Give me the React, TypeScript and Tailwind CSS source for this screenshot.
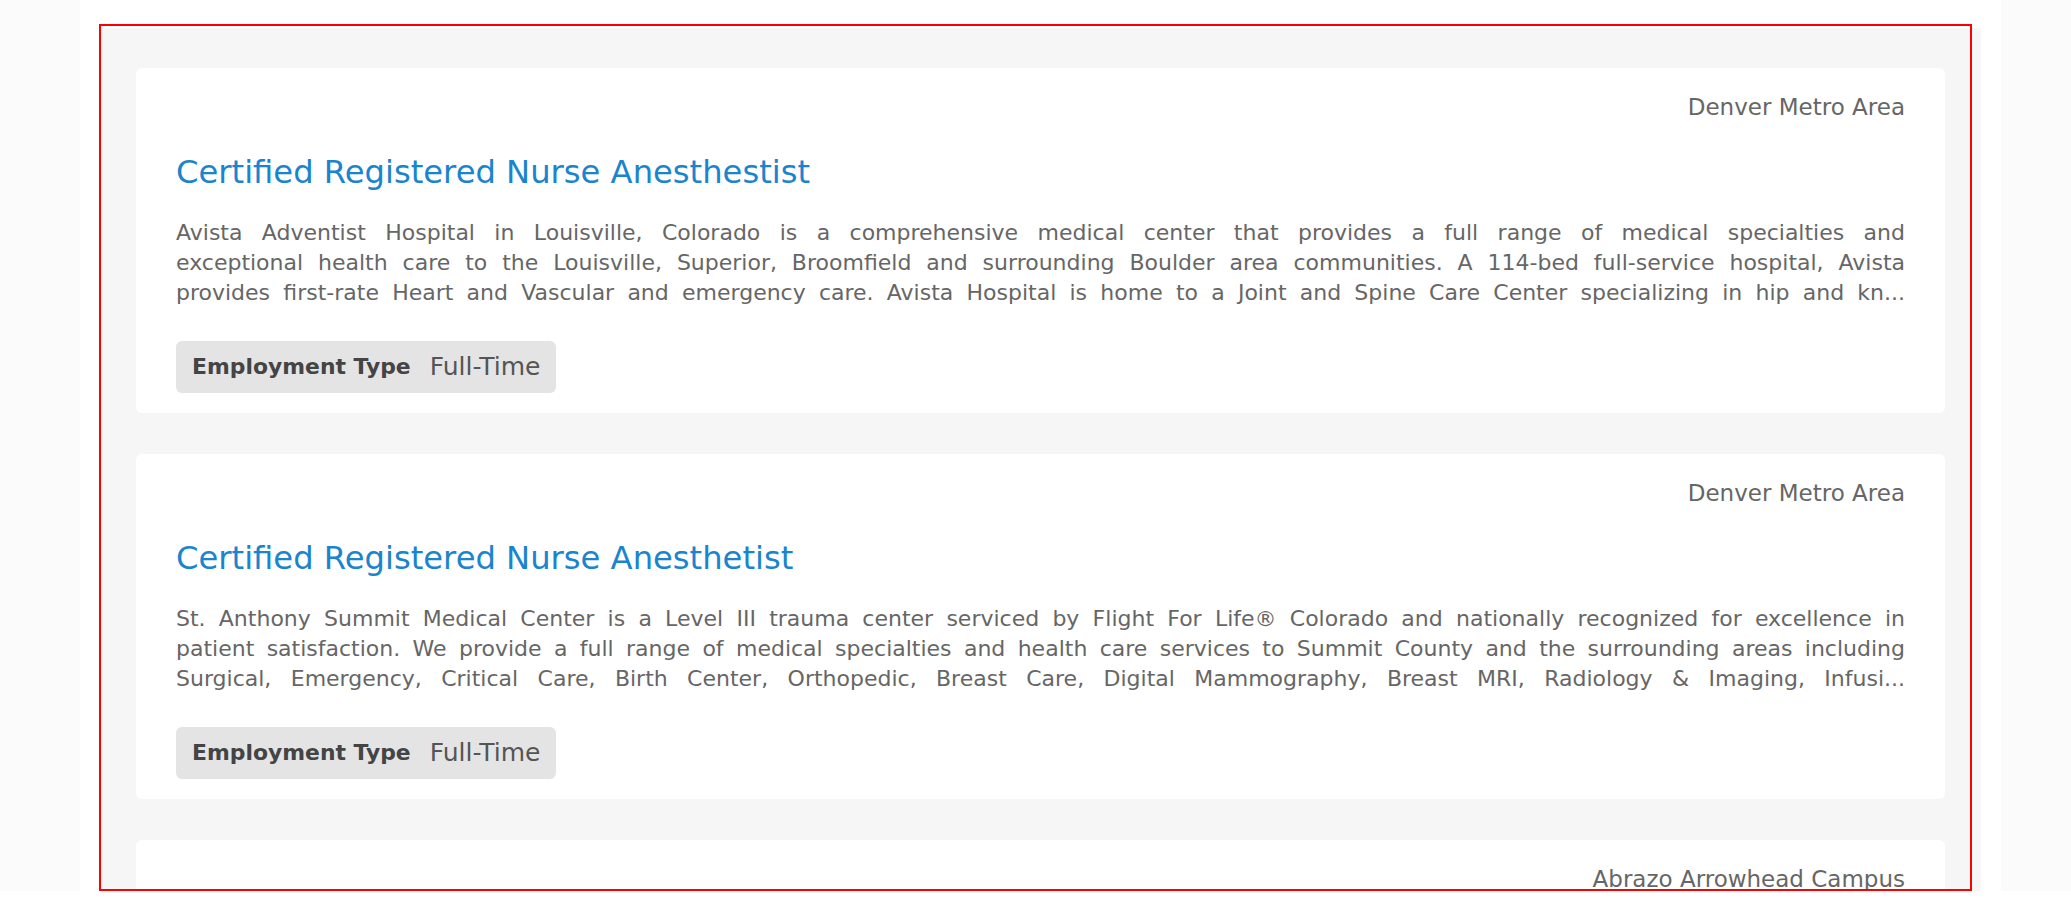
import React from 'react';

type Job = {
    location: string;
    title: string;
    lines: string[];
    employmentType: string;
};

const jobs: Job[] = [
    {
        location: 'Denver Metro Area',
        title: 'Certified Registered Nurse Anesthestist',
        lines: [
            'Avista Adventist Hospital in Louisville, Colorado is a comprehensive medical center that provides a full range of medical specialties and',
            'exceptional health care to the Louisville, Superior, Broomfield and surrounding Boulder area communities. A 114-bed full-service hospital, Avista',
            'provides first-rate Heart and Vascular and emergency care. Avista Hospital is home to a Joint and Spine Care Center specializing in hip and kn...',
        ],
        employmentType: 'Full-Time',
    },
    {
        location: 'Denver Metro Area',
        title: 'Certified Registered Nurse Anesthetist',
        lines: [
            'St. Anthony Summit Medical Center is a Level III trauma center serviced by Flight For Life® Colorado and nationally recognized for excellence in',
            'patient satisfaction. We provide a full range of medical specialties and health care services to Summit County and the surrounding areas including',
            'Surgical, Emergency, Critical Care, Birth Center, Orthopedic, Breast Care, Digital Mammography, Breast MRI, Radiology & Imaging, Infusi...',
        ],
        employmentType: 'Full-Time',
    },
    {
        // only the top of this one is on screen
        location: 'Abrazo Arrowhead Campus',
        title: '',
        lines: [],
        employmentType: '',
    },
];

function JobCard({ job }: { job: Job }) {
    return (
        <div className="bg-white rounded-md pt-6 pb-5 px-10 shrink-0">
            {/* location, top right */}
            <div className="text-right text-[23px] leading-[30px] text-[#666]">{job.location}</div>

            {job.title && (
                <h2 className="mt-[30px] text-[32.2px] leading-[40px] text-[#1a84ce] font-normal">{job.title}</h2>
            )}

            {job.lines.length > 0 && (
                <div className="mt-[26px] text-[22px] leading-[30px] text-[#666]">
                    {job.lines.map((line, i) => (
                        <div key={i} className="text-justify [text-align-last:justify] whitespace-nowrap">
                            {line}
                        </div>
                    ))}
                </div>
            )}

            {job.employmentType && (
                <div className="mt-[33px] flex">
                    <div className="h-[52px] flex items-center gap-[19px] px-4 rounded-md bg-[#e4e4e4]">
                        <span className="font-bold text-[21.9px] leading-[30px] text-[#444]">Employment Type</span>
                        <span className="text-[25px] leading-[30px] text-[#555]">{job.employmentType}</span>
                    </div>
                </div>
            )}
        </div>
    );
}

export default function App() {
    return (
        <div className="relative min-h-[917px] bg-white font-['DejaVu_Sans',sans-serif]">
            <div className="h-[891px] overflow-hidden bg-[#fbfbfb]">
                <div className="ml-[80px] w-[1921px] h-full bg-white pt-[28px] px-5">
                    <div className="h-full bg-[#f6f6f6] px-9 pt-10 flex flex-col gap-[41px]">
                        {jobs.map((job, i) => (
                            <JobCard key={i} job={job} />
                        ))}
                    </div>
                </div>
            </div>

            {/* selection outline drawn over the list */}
            <div className="pointer-events-none absolute left-[99px] top-[24px] w-[1873px] h-[867px] border-2 border-[#ff0000]" />
        </div>
    );
}
